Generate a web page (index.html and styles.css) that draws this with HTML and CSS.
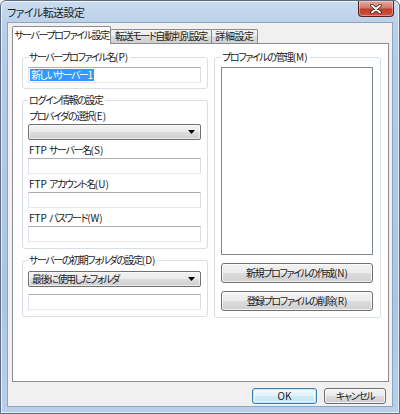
FILE: index.html
```html
<!DOCTYPE html>
<html lang="ja">
<head>
<meta charset="utf-8">
<title>ファイル転送設定</title>
<link rel="stylesheet" href="styles.css">
</head>
<body>
<div class="window">
  <div class="titlebar">
    <span class="title">ファイル転送設定</span>
    <div class="close">
      <svg width="14" height="10" viewBox="0 0 14 10">
        <path d="M3 1.5 L11 8.5 M11 1.5 L3 8.5" stroke="#3a1a16" stroke-width="3.6" stroke-linecap="round"/>
        <path d="M3 1.5 L11 8.5 M11 1.5 L3 8.5" stroke="#ffffff" stroke-width="2" stroke-linecap="round"/>
      </svg>
    </div>
  </div>
  <div class="client">
    <div class="tabctl">
      <div class="tabstrip">
        <div class="tab tab-sel tab1">サーバープロファイル設定</div>
        <div class="tab tab2">転送モード自動判別設定</div>
        <div class="tab tab3">詳細設定</div>
      </div>
      <div class="panel">
        <div class="col-left">
          <fieldset class="group g1">
            <legend>サーバープロファイル名<span class="l">(P)</span></legend>
            <div class="textbox"><span class="sel">新しいサーバー<span class="l">1</span></span></div>
          </fieldset>
          <fieldset class="group g2">
            <legend>ログイン情報の設定</legend>
            <div class="field">
              <div class="label">プロバイダの選択<span class="l">(E)</span></div>
              <div class="combo"><span></span><svg class="arrow" width="7" height="4" viewBox="0 0 7 4"><path d="M0 0 H7 L3.5 4 Z" fill="#000"/></svg></div>
            </div>
            <div class="field">
              <div class="label"><span class="l">FTP </span>サーバー名<span class="l">(S)</span></div>
              <div class="textbox"></div>
            </div>
            <div class="field">
              <div class="label"><span class="l">FTP </span>アカウント名<span class="l">(U)</span></div>
              <div class="textbox"></div>
            </div>
            <div class="field last">
              <div class="label"><span class="l">FTP </span>パスワード<span class="l">(W)</span></div>
              <div class="textbox"></div>
            </div>
          </fieldset>
          <fieldset class="group g3">
            <legend>サーバーの初期フォルダの設定<span class="l">(D)</span></legend>
            <div class="combo"><span>最後に使用したフォルダ</span><svg class="arrow" width="7" height="4" viewBox="0 0 7 4"><path d="M0 0 H7 L3.5 4 Z" fill="#000"/></svg></div>
            <div class="textbox tb-folder"></div>
          </fieldset>
        </div>
        <fieldset class="group gright">
          <legend>プロファイルの管理<span class="l">(M)</span></legend>
          <div class="listbox"></div>
          <div class="btn wide">新規プロファイルの作成<span class="l">(N)</span></div>
          <div class="btn wide">登録プロファイルの削除<span class="l">(R)</span></div>
        </fieldset>
      </div>
    </div>
    <div class="footer">
      <div class="btn btn-ok">OK</div>
      <div class="btn btn-cancel">キャンセル</div>
    </div>
  </div>
</div>
</body>
</html>
```
FILE: styles.css
```css
* { box-sizing: border-box; }
html, body { margin: 0; padding: 0; width: 400px; height: 414px; overflow: hidden; }
body {
  font-family: "Noto Sans CJK JP", "Noto Sans", sans-serif;
  font-size: 10px;
  letter-spacing: -1.4px;
  color: #1a1a1a;
  font-feature-settings: "palt";
  background: #fff;
}
.l { letter-spacing: 0; }
.window {
  width: 400px;
  height: 414px;
  display: flex;
  flex-direction: column;
  border: 1px solid #5b6d84;
  border-radius: 6px 6px 0 0;
  background: linear-gradient(180deg, #cbdcef 0px, #bcd1e9 21px, #b3cbe6 60px, #abc6e4 300px, #b8d0ea 414px);
  box-shadow: inset 1px 1px 0 rgba(255,255,255,0.7), inset -1px -1px 0 rgba(255,255,255,0.6);
}
.titlebar {
  height: 21px;
  flex: none;
  display: flex;
  justify-content: space-between;
  align-items: flex-start;
  padding-left: 6px;
  padding-right: 5px;
}
.title {
  font-size: 11px;
  letter-spacing: -0.6px;
  line-height: 14px;
  margin-top: 4px;
  color: #1e1e1e;
}
.close {
  width: 36px;
  height: 16px;
  border: 1px solid #5a2019;
  border-top: none;
  border-radius: 0 0 4px 4px;
  background: linear-gradient(180deg, #e7a99f 0%, #d47a6b 45%, #c13c2b 55%, #c9573f 100%);
  box-shadow: inset 0 0 0 1px rgba(255,255,255,0.35);
  display: flex;
  align-items: center;
  justify-content: center;
}
.client {
  flex: none;
  height: 385px;
  margin: 0 6px;
  background: #f0f0f0;
  border: 1px solid #8ea3bc;
  display: flex;
  flex-direction: column;
}
.tabctl {
  margin: 3px 0 0 4px;
  width: 377px;
}
.tabstrip {
  height: 17px;
  display: flex;
  align-items: flex-end;
  position: relative;
  z-index: 2;
}
.tab {
  height: 14px;
  border: 1px solid #898c95;
  border-bottom: none;
  border-radius: 2px 2px 0 0;
  background: linear-gradient(180deg, #f3f3f3 0%, #ebebeb 50%, #dddddd 50%, #cfcfcf 100%);
  line-height: 12px;
  text-align: center;
  white-space: nowrap;
  overflow: hidden;
  letter-spacing: -1.4px;
}
.tab-sel {
  height: 18px;
  margin-bottom: -1px;
  background: #fff;
  line-height: 16px;
  position: relative;
  z-index: 3;
}
.tab1 { width: 99px; }
.tab2 { width: 102px; margin-left: -1px; }
.tab3 { width: 47px; margin-left: -1px; letter-spacing: -0.4px; }
.panel {
  height: 339px;
  background: #fff;
  border: 1px solid #898c95;
  display: flex;
  align-items: flex-start;
  gap: 6px;
  padding: 6px 0 0 9px;
}
.col-left {
  width: 186px;
  display: flex;
  flex-direction: column;
  gap: 4px;
}
.group {
  margin: 0;
  min-width: 0;
  border: 1px solid #d5dfe5;
  border-radius: 3px;
  padding: 0 6px 6px 5px;
}
.group legend {
  padding: 0 2px 0 1px;
  line-height: 14px;
  white-space: nowrap;
}
.g1 { padding-top: 3px; padding-bottom: 5px; }
.g2 { padding-top: 2px; padding-bottom: 6px; }
.g3 { padding-top: 4px; padding-bottom: 6px; }
.gright {
  width: 167px;
  padding: 3px 7px 6px 6px;
}
.textbox {
  height: 16px;
  width: 100%;
  background: #fff;
  border: 1px solid;
  border-color: #abadb3 #dbdfe6 #e3e9ef #e2e3ea;
  padding: 1px 0 0 1px;
  display: flex;
  align-items: flex-start;
}
.sel {
  background: #3399ff;
  color: #fff;
  line-height: 12px;
  padding: 0 1px;
}
.field { margin-bottom: 3px; }
.field.last { margin-bottom: 0; }
.label {
  line-height: 14px;
  margin-bottom: 1px;
  padding-left: 1px;
}
.combo {
  height: 16px;
  width: 100%;
  border: 1px solid #707070;
  border-radius: 2px;
  background: linear-gradient(180deg, #f2f2f2 0%, #ebebeb 50%, #dddddd 50%, #cfcfcf 100%);
  box-shadow: inset 0 0 0 1px rgba(255,255,255,0.6);
  display: flex;
  align-items: center;
  justify-content: space-between;
  padding: 0 5px 0 3px;
  line-height: 14px;
}
.tb-folder { margin-top: 7px; }
.listbox {
  height: 188px;
  width: 100%;
  border: 1px solid #828790;
  background: #fff;
}
.btn {
  height: 20px;
  border: 1px solid #707070;
  border-radius: 3px;
  background: linear-gradient(180deg, #f2f2f2 0%, #ebebeb 50%, #dddddd 50%, #cfcfcf 100%);
  box-shadow: inset 0 0 0 1px rgba(255,255,255,0.7);
  display: flex;
  align-items: center;
  justify-content: center;
  line-height: 14px;
  white-space: nowrap;
}
.btn.wide { width: 100%; margin-top: 8px; }
.footer {
  display: flex;
  justify-content: flex-end;
  gap: 7px;
  margin-top: 6px;
  padding-right: 6px;
}
.btn-ok, .btn-cancel { height: 16px; }
.btn-ok {
  width: 65px;
  letter-spacing: 0;
  border-color: #3c7fb1;
  background: linear-gradient(180deg, #f0f8fd 0%, #e3f2fb 50%, #d2ebf8 50%, #c4e4f5 100%);
  box-shadow: inset 0 0 0 1px #c2e4f6, inset 0 0 0 2px rgba(255,255,255,0.6);
}
.btn-cancel { width: 62px; }
```
